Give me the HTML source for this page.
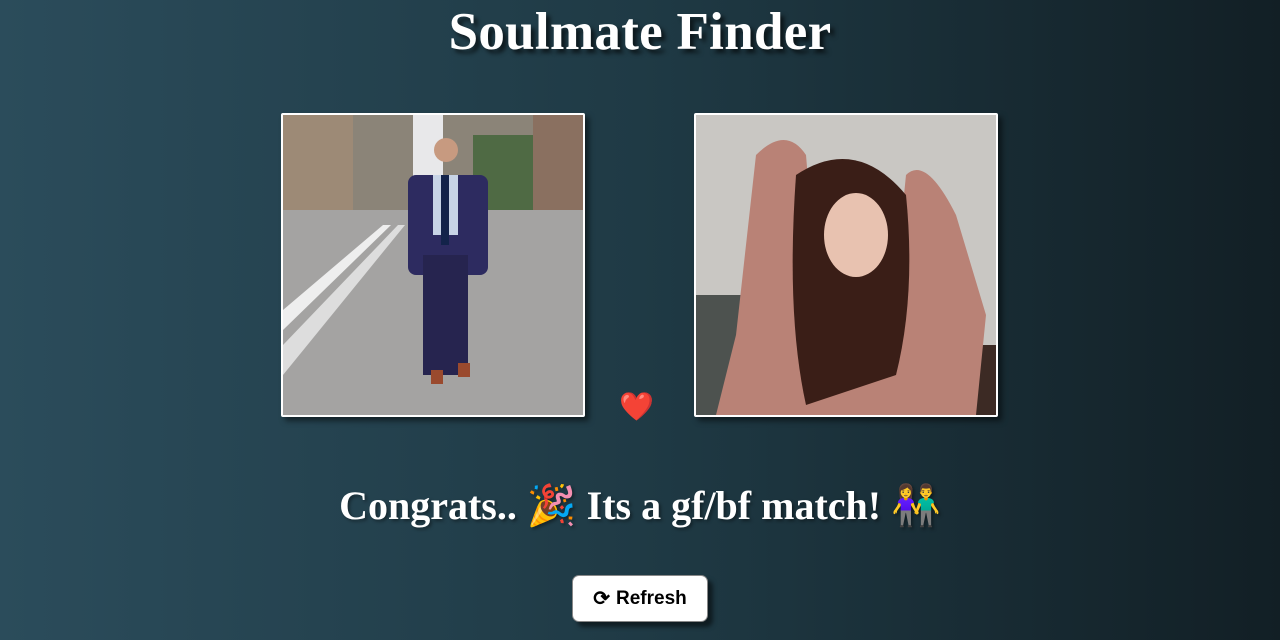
<!DOCTYPE html>
<html><head><meta charset="utf-8"><style>
html,body{margin:0;padding:0}
body{width:1280px;height:640px;overflow:hidden;background:linear-gradient(90deg,#2b4c5b 0%,#1f3a45 50%,#121f25 100%);font-family:"Liberation Serif",serif;position:relative}
h1{position:absolute;top:2px;left:0;width:1280px;text-align:center;margin:0;color:#fff;font-size:53px;font-weight:bold;text-shadow:4px 4px 4px rgba(0,0,0,.6);letter-spacing:0.3px}
.ph{position:absolute;top:113px;width:300px;height:300px;border:2px solid #fff;border-radius:2px;box-shadow:4px 4px 6px rgba(0,0,0,.5);overflow:hidden}
.msg{position:absolute;top:482px;left:0;width:1280px;text-align:center;color:#fff;font-size:40px;font-weight:bold;text-shadow:2px 2px 3px rgba(0,0,0,.4);font-family:"Liberation Serif","Noto Sans CJK JP",serif}
.btn{position:absolute;left:572px;top:575px;width:134px;height:45px;background:#fff;border:1px solid #888;border-radius:7px;box-shadow:5px 5px 4px rgba(0,0,0,.5);font-family:"Liberation Sans",sans-serif;font-weight:bold;font-size:19px;display:flex;align-items:center;justify-content:center;gap:6px;color:#000}
</style></head><body>
<h1>Soulmate Finder</h1>
<div class="ph" style="left:281px">
<svg width="300" height="300" viewBox="0 0 300 300">
<rect width="300" height="300" fill="#9a9a98"/>
<rect width="300" height="100" fill="#8b8478"/>
<rect x="130" y="0" width="30" height="100" fill="#e8e8ea"/>
<rect x="0" y="0" width="70" height="95" fill="#9d8a76"/>
<rect x="190" y="20" width="70" height="80" fill="#4f6a44"/>
<rect x="250" y="0" width="50" height="95" fill="#8a7060"/>
<rect x="0" y="95" width="300" height="205" fill="#a4a3a2"/>
<polygon points="0,195 100,110 108,110 0,215" fill="#eee"/>
<polygon points="0,230 115,110 122,110 0,260" fill="#ddd"/>
<rect x="125" y="60" width="80" height="100" rx="8" fill="#2d2b60"/>
<rect x="150" y="60" width="25" height="60" fill="#c8d4e6"/>
<rect x="158" y="60" width="8" height="70" fill="#13234a"/>
<circle cx="163" cy="35" r="12" fill="#c79a80"/>
<rect x="140" y="140" width="45" height="120" fill="#26244f"/>
<rect x="148" y="255" width="12" height="14" fill="#9a4a2e"/>
<rect x="175" y="248" width="12" height="14" fill="#9a4a2e"/>
</svg></div>
<div class="ph" style="left:694px">
<svg width="300" height="300" viewBox="0 0 300 300">
<rect width="300" height="300" fill="#c9c7c3"/>
<rect x="0" y="180" width="70" height="120" fill="#4d524f"/>
<rect x="240" y="230" width="60" height="70" fill="#3c2a24"/>
<path d="M60 40 Q90 10 110 40 L120 160 L200 160 L210 60 Q230 40 260 100 L290 200 L280 300 L20 300 L40 220 Z" fill="#b98276"/>
<path d="M100 60 Q160 20 210 80 Q220 180 200 260 L110 290 Q90 200 100 60Z" fill="#3a1e17"/>
<ellipse cx="160" cy="120" rx="32" ry="42" fill="#e8c2b0"/>
</svg></div>
<div style="position:absolute;left:619px;top:390px;font-size:28px;font-family:'Noto Color Emoji','DejaVu Sans',sans-serif;color:#d02020">❤</div>
<div class="msg">Congrats.. 🎉 Its a gf/bf match! 👫</div>
<div class="btn"><span style="font-size:20px">⟳</span>Refresh</div>
</body></html>
